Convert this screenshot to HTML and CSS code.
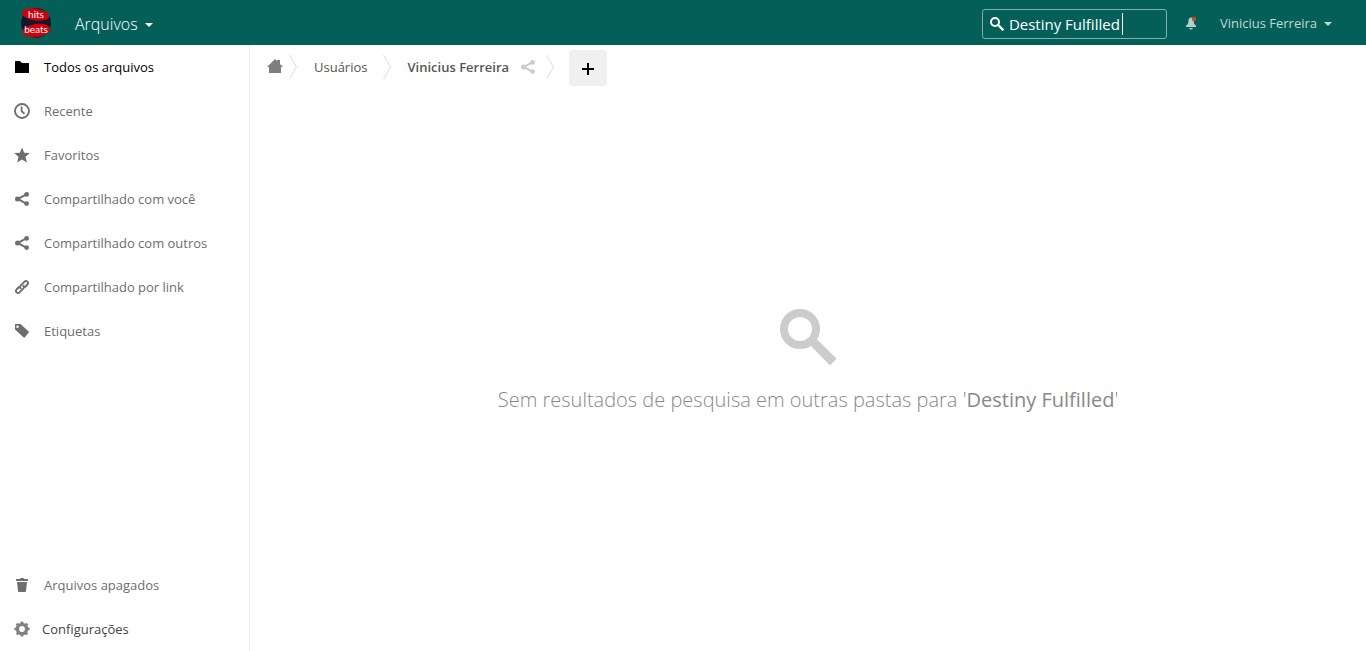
FILE: index.html
```html
<!DOCTYPE html>
<html lang="pt-BR">
<head>
<meta charset="utf-8">
<title>Arquivos</title>
<meta name="viewport" content="width=device-width, initial-scale=1">
<link rel="stylesheet" href="styles.css">
</head>
<body>
<svg class="symbols" aria-hidden="true">
  <symbol id="share" viewBox="0 0 16 16"><path d="M12.3 3.4 3.7 8l8.6 4.6" fill="none" stroke="currentColor" stroke-width="2"/><circle cx="12.6" cy="3.4" r="2.4"/><circle cx="3.5" cy="8" r="2.5"/><circle cx="12.6" cy="12.6" r="2.4"/></symbol>
  <symbol id="search" viewBox="0 0 16 16"><circle cx="6" cy="6" r="4" fill="none" stroke="currentColor" stroke-width="2"/><path d="M10.3 8.6 14.9 13.1Q15.1 13.4 14.9 13.7L13.8 14.8Q13.5 15.1 13.2 14.8L8.7 10.2Z"/></symbol>
</svg>
<header class="topbar">
  <a class="brand" href="#" aria-label="hits beats">
    <svg class="logo" viewBox="0 0 32 32">
      <circle cx="16" cy="16" r="15" fill="#15182b"/>
      <ellipse cx="15.500" cy="7.500" rx="13.800" ry="6" fill="#d0000b" transform="rotate(8 15.500 7.500)"/>
      <ellipse cx="16.500" cy="23.500" rx="14" ry="6.500" fill="#d0000b" transform="rotate(-8 16.500 23.500)"/>
      <text class="logo-text" x="16" y="11" text-anchor="middle">hits</text>
      <text class="logo-text" x="16" y="26" text-anchor="middle">beats</text>
    </svg>
  </a>
  <button class="app-menu" type="button">Arquivos <span class="caret"></span></button>
  <form class="search" role="search">
    <svg class="icon" aria-hidden="true"><use href="#search"/></svg>
    <input class="search-input" type="text" aria-label="Pesquisar" value="Destiny Fulfilled">
    <span class="text-cursor"></span>
  </form>
  <button class="bell" type="button" aria-label="Notificações">
    <svg class="icon" viewBox="0 0 16 16"><path d="M8 2.5C6.2 2.7 5.6 4 5.4 6.2 5.2 8.600 4.500 9.600 3 10.600V12H13V10.600C11.500 9.600 11 8.600 10.700 6.200 10.500 4 9.800 2.700 8 2.500ZM6.200 13A1.800 1.500 0 0 0 9.800 13Z"/><circle cx="11" cy="4" r="2.200" fill="#c3501c"/></svg>
  </button>
  <button class="user-menu" type="button">Vinicius Ferreira <span class="caret"></span></button>
</header>
<div class="layout">
  <nav class="sidebar">
    <ul class="nav-list">
      <li><a class="nav-item active" href="#"><svg class="icon" viewBox="0 0 16 16"><path d="M1.500 2Q1 2 1 2.500V13.500Q1 14 1.500 14H14.500Q15 14 15 13.500V4.500Q15 4 14.500 4H8L6 2Z"/></svg>Todos os arquivos</a></li>
      <li><a class="nav-item" href="#"><svg class="icon" viewBox="0 0 16 16"><circle cx="8" cy="8" r="7" fill="none" stroke="currentColor" stroke-width="1.900"/><path d="M7.600 3.500V8.200L10.500 10.700" fill="none" stroke="currentColor" stroke-width="1.800"/></svg>Recente</a></li>
      <li><a class="nav-item" href="#"><svg class="icon" viewBox="0 0 16 16"><path d="M8 .4 10.200 5.700 15.800 6.100 11.500 9.800 12.900 15.400 8 12.400 3.100 15.400 4.500 9.800.2 6.100 5.800 5.700Z"/></svg>Favoritos</a></li>
      <li><a class="nav-item" href="#"><svg class="icon"><use href="#share"/></svg>Compartilhado com você</a></li>
      <li><a class="nav-item" href="#"><svg class="icon"><use href="#share"/></svg>Compartilhado com outros</a></li>
      <li><a class="nav-item" href="#"><svg class="icon" viewBox="0 0 16 16"><g fill="none" stroke="currentColor" stroke-width="1.900" stroke-linecap="round"><path d="M6.600 9.300C5.700 8.200 6 7.200 6.800 6.300L10.500 2.600C12.500 .9 15.200 3.400 13.500 5.500L11 8"/><path d="M9.400 6.700C10.300 7.800 10 8.800 9.200 9.700L5.500 13.400C3.500 15.100 .8 12.600 2.500 10.500L5 8"/></g></svg>Compartilhado por link</a></li>
      <li><a class="nav-item" href="#"><svg class="icon" viewBox="0 0 16 16"><path fill-rule="evenodd" d="M1.500 1H6.500L14.700 8.600Q15.200 9.100 14.700 9.600L10.700 14.600Q10.200 15 9.700 14.600L1 6.500V1.500Q1 1 1.500 1ZM3.500 2.500A1.200 1.200 0 1 0 3.500 4.900 1.200 1.200 0 1 0 3.500 2.500Z"/></svg>Etiquetas</a></li>
    </ul>
    <div class="nav-bottom">
      <a class="nav-item" href="#"><svg class="icon" viewBox="0 0 16 16"><path d="M6.500 1 5.800 2H2.500Q2 2 2 2.500V4H14V2.500Q14 2 13.500 2H10.200L9.500 1ZM3 5 4 14.200Q4.100 15 5 15H11Q11.900 15 12 14.200L13 5Z"/></svg>Arquivos apagados</a>
      <button class="nav-item settings" type="button"><svg class="icon" viewBox="0 0 16 16"><circle cx="8" cy="8" r="4.600" fill="none" stroke="currentColor" stroke-width="3.400"/><path d="M8 .4V3M8 13V15.600M.4 8H3M13 8H15.600M2.600 2.600 4.400 4.400M11.600 11.600 13.400 13.400M2.600 13.400 4.400 11.600M11.600 4.400 13.400 2.600" stroke="currentColor" stroke-width="2.700"/></svg>Configurações</button>
    </div>
  </nav>
  <main class="content">
    <div class="controls">
      <a class="crumb home" href="#" aria-label="Início"><svg class="icon" viewBox="0 0 16 16"><path d="M8 0 0 8H2V14H14V8H16L13 5V1H10V2Z"/></svg></a>
      <svg class="chevron" viewBox="0 0 8 24"><path d="M.5 0 7.500 12 .5 24"/></svg>
      <a class="crumb users" href="#">Usuários</a>
      <svg class="chevron" viewBox="0 0 8 24"><path d="M.5 0 7.500 12 .5 24"/></svg>
      <a class="crumb current" href="#">Vinicius Ferreira</a>
      <button class="share-button" type="button" aria-label="Compartilhar"><svg class="icon"><use href="#share"/></svg></button>
      <svg class="chevron" viewBox="0 0 8 24"><path d="M.5 0 7.500 12 .5 24"/></svg>
      <button class="add-button" type="button" aria-label="Novo"><svg class="icon" viewBox="0 0 16 16"><path d="M7 3H9V8H14V10H9V15H7V10H2V8H7Z"/></svg></button>
    </div>
    <section class="empty">
      <svg class="empty-icon" aria-hidden="true"><use href="#search"/></svg>
      <p class="empty-text">Sem resultados de pesquisa em outras pastas para '<strong>Destiny Fulfilled</strong>'</p>
    </section>
  </main>
</div>
</body>
</html>
```
FILE: styles.css
```css
* { box-sizing: border-box; }
body {
  margin: 0;
  min-height: 100vh;
  display: flex;
  flex-direction: column;
  background: #fff;
  color: #555;
  font: 13px/20px "Open Sans", "Noto Sans", sans-serif;
}
a { color: inherit; text-decoration: none; }
button { margin: 0; padding: 0; border: 0; background: none; color: inherit; font: inherit; cursor: pointer; }
svg { display: block; flex: none; fill: currentColor; }
.symbols { position: absolute; width: 0; height: 0; }
.icon { width: 16px; height: 16px; }

.topbar {
  height: 45px;
  display: flex;
  align-items: center;
  padding: 0 34px 0 20px;
  background: #045f59;
  color: #fff;
}
.logo { width: 32px; height: 32px; }
.logo-text { fill: #fff; font: 10px Lato, "Open Sans", sans-serif; }
.app-menu {
  display: flex;
  align-items: center;
  gap: 7px;
  margin: 2px auto 0 23px;
  font-size: 16px;
  font-weight: 300;
  line-height: 24px;
}
.caret { margin-top: 2px; border: 4px solid transparent; border-top-color: currentColor; border-bottom: 0; }
.search {
  position: relative;
  width: 185px;
  height: 30px;
  margin-top: 3px;
  padding-left: 6px;
  display: flex;
  align-items: center;
  border: 1px solid #82afac;
  border-radius: 3px;
}
.search-input {
  flex: 1;
  min-width: 0;
  height: 28px;
  padding: 0 4px;
  border: 0;
  outline: 0;
  background: transparent;
  color: #fff;
  font: 15px "Open Sans", "Noto Sans", sans-serif;
}
.text-cursor { position: absolute; top: 3px; left: 139px; width: 1px; height: 22px; background: #fff; }
.bell { margin-left: 16px; color: #b4cfcd; }
.user-menu { display: flex; align-items: center; gap: 7px; margin-left: 21px; color: #c0d7d5; }

.layout { flex: 1; display: flex; }
.sidebar {
  width: 250px;
  flex: none;
  display: flex;
  flex-direction: column;
  justify-content: space-between;
  border-right: 1px solid #eee;
}
.nav-list { margin: 0; padding: 0; list-style: none; }
.nav-item {
  width: 100%;
  height: 44px;
  display: flex;
  align-items: center;
  gap: 14px;
  padding: 0 14px;
  color: #6e6e6e;
}
.nav-item.active { color: #000; }
.nav-item.settings { gap: 12px; color: #444; }
.settings .icon { color: #808080; }

.content { flex: 1; min-width: 0; display: flex; flex-direction: column; }
.controls { height: 44px; display: flex; align-items: center; padding-left: 17px; }
.home { color: #7f7f7f; }
.home + .chevron { margin-left: 6px; }
.chevron { width: 8px; height: 24px; fill: none; stroke: #ddd; }
.users { margin: 0 16px 0 17px; }
.current { margin-left: 16px; color: #555; font-weight: 600; }
.share-button { margin: 0 10px 0 11px; color: #ccc; }
.add-button {
  width: 38px;
  height: 36px;
  margin: 2px 0 0 15px;
  display: grid;
  place-items: center;
  border-radius: 3px;
  background: #f0f0f0;
  color: #000;
}
.empty {
  flex: 1;
  display: flex;
  flex-direction: column;
  align-items: center;
  justify-content: center;
  padding-bottom: 21px;
}
.empty-icon { width: 64px; height: 64px; color: #ccc; }
.empty-text { margin: 16px 0 0; color: #888; font-size: 20px; font-weight: 300; line-height: 30px; }
.empty-text strong { font-weight: 400; }
```
